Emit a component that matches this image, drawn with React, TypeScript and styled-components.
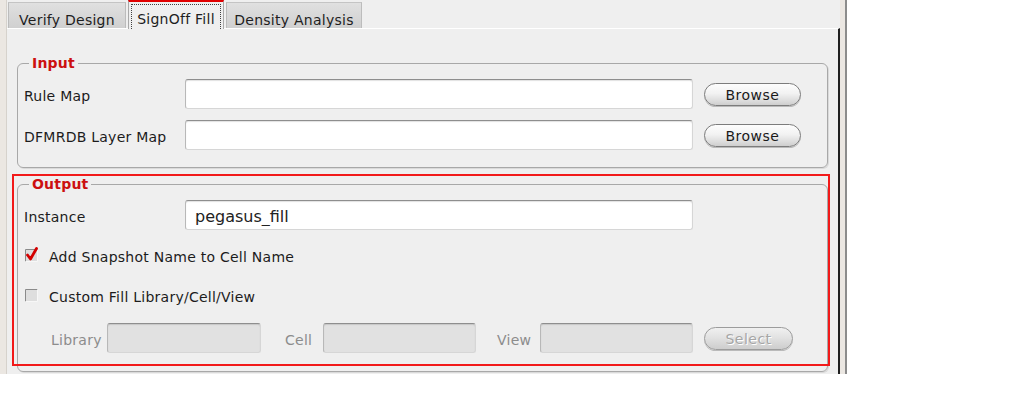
import React from "react";
import styled, { createGlobalStyle } from "styled-components";

const GlobalStyle = createGlobalStyle`
  html, body { margin: 0; padding: 0; background: #ffffff; }
  body { font-family: "DejaVu Sans", "Liberation Sans", sans-serif; }
  * { box-sizing: border-box; }
`;

const Window = styled.div`
  display: flex;
  width: 847px;
  height: 374px;
  background: #ebe7e2;
`;

const LeftEdge = styled.div`
  width: 7px;
  border-right: 1px solid #d6d2cc;
`;

const RightEdge = styled.div`
  width: 7px;
  border-right: 2px solid #8c8c8c;
`;

const Main = styled.div`
  flex: 1;
  display: flex;
  flex-direction: column;
  background: #efefef;
`;

const TabBar = styled.div`
  height: 28px;
  display: flex;
  align-items: flex-end;
  gap: 2px;
  padding-left: 1px;
`;

const Tab = styled.div<{ $w: number; $active?: boolean }>`
  position: relative;
  z-index: 1;
  width: ${(p) => p.$w}px;
  height: ${(p) => (p.$active ? 29 : 26)}px;
  margin-bottom: ${(p) => (p.$active ? -1 : 0)}px;
  padding: ${(p) => (p.$active ? "2px 2px 0" : "9px 0 0")};
  border: 1px solid ${(p) => (p.$active ? "#a9a9a9" : "#bcbcbc")};
  border-top: ${(p) => (p.$active ? "2px solid #e00000" : "1px solid #c4c4c4")};
  border-bottom: none;
  background: ${(p) =>
    p.$active ? "#efefef" : "linear-gradient(to bottom, #e0e0e0, #d0d0d0)"};
  font-size: 14px;
  line-height: 16px;
  letter-spacing: 0.25px;
  color: #1e1e1e;
  text-align: center;
  white-space: nowrap;
`;

const FocusRing = styled.div`
  height: 25px;
  border: 1px dotted #404040;
  border-bottom: none;
  padding-top: 6px;
`;

const Panel = styled.div`
  flex: 1;
  border-top: 1px solid #ffffff;
  border-right: 2px solid #1f1f1f;
  padding: 26px 10px 0 10px;
`;

const Group = styled.fieldset<{ $pb: number }>`
  margin: 0;
  min-width: 0;
  border: 1px solid #a8a8a8;
  border-radius: 6px;
  padding: 8px 6px ${(p) => p.$pb}px 6px;
  box-shadow: 1px 1px 0 #dadada;
  display: flex;
  flex-direction: column;
`;

const Legend = styled.legend`
  margin-left: 5px;
  padding: 0 3px;
  font-size: 14px;
  line-height: 16px;
  font-weight: bold;
  letter-spacing: 0.2px;
  color: #cc1010;
`;

const Stack = styled.div<{ $gap: number }>`
  display: flex;
  flex-direction: column;
  gap: ${(p) => p.$gap}px;
`;

const Row = styled.div<{ $h: number; $indent?: number; $mt?: number }>`
  display: flex;
  align-items: center;
  height: ${(p) => p.$h}px;
  padding-left: ${(p) => p.$indent ?? 0}px;
  margin-top: ${(p) => p.$mt ?? 0}px;
`;

const Label = styled.span<{ $w?: number; $ml?: number; $disabled?: boolean }>`
  width: ${(p) => (p.$w ? `${p.$w}px` : "auto")};
  margin-left: ${(p) => p.$ml ?? 0}px;
  padding-top: 3px;
  flex-shrink: 0;
  font-size: 14px;
  letter-spacing: 0.25px;
  color: ${(p) => (p.$disabled ? "#8c8c8c" : "#1c1c1c")};
  white-space: nowrap;
`;

const TextField = styled.input<{ $w: number; $disabled?: boolean }>`
  width: ${(p) => p.$w}px;
  height: 30px;
  flex-shrink: 0;
  margin: 0;
  border: 1px solid #d6d6d6;
  border-top-color: #8e8e8e;
  border-left-color: #b8b8b8;
  border-radius: 3px;
  background: ${(p) => (p.$disabled ? "#e1e1e1" : "#ffffff")};
  box-shadow: inset 0 1px 1px rgba(0, 0, 0, 0.12);
  padding: 3px 9px 0 9px;
  font-family: "DejaVu Sans", sans-serif;
  font-size: 16px;
  color: #222222;
  outline: none;
`;

const PillButton = styled.button<{ $w: number; $disabled?: boolean }>`
  width: ${(p) => p.$w}px;
  height: 23px;
  margin-left: 11px;
  flex-shrink: 0;
  padding: 2px 0 0 0;
  border: 1px solid ${(p) => (p.$disabled ? "#9c9c9c" : "#7c7c7c")};
  border-radius: 12px;
  background: ${(p) =>
    p.$disabled
      ? "linear-gradient(to bottom, #f0f0f0 0%, #e2e2e2 45%, #cdcdcd 100%)"
      : "linear-gradient(to bottom, #fdfdfd 0%, #f2f2f2 45%, #dcdcdc 80%, #cecece 100%)"};
  box-shadow: 0 1px 0 rgba(0, 0, 0, 0.22);
  font-family: "DejaVu Sans", sans-serif;
  font-size: 14px;
  letter-spacing: 0.5px;
  color: ${(p) => (p.$disabled ? "#a6a6a6" : "#1a1a1a")};
  text-shadow: ${(p) => (p.$disabled ? "1px 1px 0 #ffffff" : "none")};
`;

const CheckRow = styled.label`
  display: flex;
  align-items: center;
  gap: 10px;
  height: 30px;
  padding-left: 1px;
  font-size: 14px;
  letter-spacing: 0.25px;
  color: #1c1c1c;
`;

const CheckText = styled.span`
  padding-top: 3px;
`;

const OutputWrap = styled.div`
  position: relative;
  margin-top: 8px;
`;

const Highlight = styled.div`
  position: absolute;
  top: -2px;
  left: -5px;
  right: -2px;
  bottom: 6px;
  border: 2px solid #f21a1a;
  pointer-events: none;
`;

const CheckBox = ({ checked }: { checked?: boolean }) => (
  <svg width="14" height="16" viewBox="0 0 14 16" style={{ flexShrink: 0 }}>
    <rect x="0.5" y="2.5" width="12" height="12" fill="#dedede" />
    <path d="M0.5 14.5 V2.5 H12.5" stroke="#8a8a8a" fill="none" />
    <path d="M0.5 14.5 H12.5 V2.5" stroke="#f7f7f7" fill="none" />
    {checked && (
      <path
        d="M2.5 8 L5.5 12 L11.5 1.5"
        stroke="#d40000"
        strokeWidth="2.8"
        fill="none"
        strokeLinecap="round"
        strokeLinejoin="round"
      />
    )}
  </svg>
);

export default function App() {
  return (
    <>
      <GlobalStyle />
      <Window>
        <LeftEdge />
        <Main>
          <TabBar>
            <Tab $w={118}>Verify Design</Tab>
            <Tab $w={96} $active>
              <FocusRing>SignOff Fill</FocusRing>
            </Tab>
            <Tab $w={136}>Density Analysis</Tab>
          </TabBar>
          <Panel>
            <Group $pb={17}>
              <Legend>Input</Legend>
              <Stack $gap={11}>
                <Row $h={30}>
                  <Label $w={161}>Rule Map</Label>
                  <TextField $w={508} readOnly defaultValue="" />
                  <PillButton $w={97}>Browse</PillButton>
                </Row>
                <Row $h={30}>
                  <Label $w={161}>DFMRDB Layer Map</Label>
                  <TextField $w={508} readOnly defaultValue="" />
                  <PillButton $w={97}>Browse</PillButton>
                </Row>
              </Stack>
            </Group>
            <OutputWrap>
              <Group $pb={18}>
                <Legend>Output</Legend>
                <Stack $gap={10}>
                  <Row $h={30}>
                    <Label $w={161}>Instance</Label>
                    <TextField $w={508} readOnly defaultValue="pegasus_fill" />
                  </Row>
                  <CheckRow>
                    <CheckBox checked />
                    <CheckText>Add Snapshot Name to Cell Name</CheckText>
                  </CheckRow>
                  <CheckRow>
                    <CheckBox />
                    <CheckText>Custom Fill Library/Cell/View</CheckText>
                  </CheckRow>
                  <Row $h={30} $indent={27} $mt={3}>
                    <Label $w={56} $disabled>Library</Label>
                    <TextField $w={154} $disabled readOnly disabled />
                    <Label $w={38} $ml={24} $disabled>Cell</Label>
                    <TextField $w={153} $disabled readOnly disabled />
                    <Label $w={43} $ml={21} $disabled>View</Label>
                    <TextField $w={153} $disabled readOnly disabled />
                    <PillButton $w={89} $disabled disabled>Select</PillButton>
                  </Row>
                </Stack>
              </Group>
              <Highlight />
            </OutputWrap>
          </Panel>
        </Main>
        <RightEdge />
      </Window>
    </>
  );
}
